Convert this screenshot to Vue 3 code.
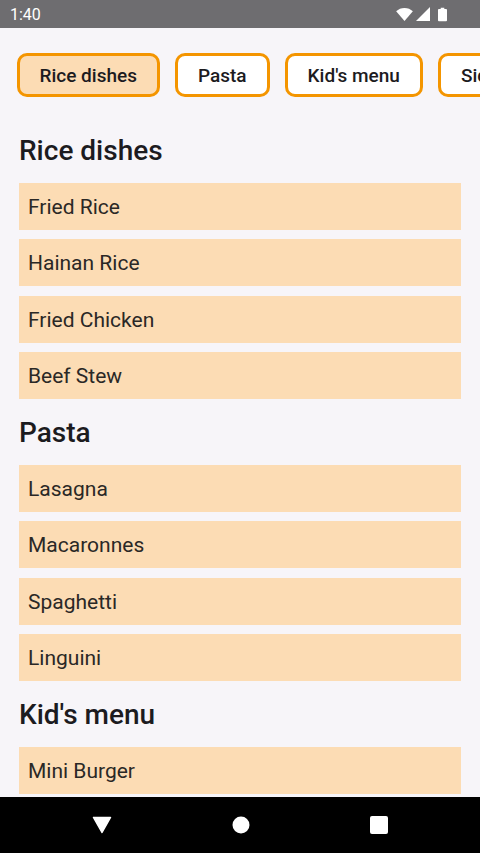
<script setup>
const tabs = [
  { label: 'Rice dishes', selected: true },
  { label: 'Pasta' },
  { label: "Kid's menu" },
  { label: 'Side dishes' },
]

const sections = [
  { title: 'Rice dishes', items: ['Fried Rice', 'Hainan Rice', 'Fried Chicken', 'Beef Stew'] },
  { title: 'Pasta', items: ['Lasagna', 'Macaronnes', 'Spaghetti', 'Linguini'] },
  { title: "Kid's menu", items: ['Mini Burger'] },
]
</script>

<template>
  <div class="screen">
    <div class="status-bar">
      <span class="status-bar__time">1:40</span>
      <div class="status-bar__icons">
        <svg width="17" height="13" viewBox="0 0 18 14"><path d="M0 3.600C2.400 1.300 5.500 0 9 0s6.600 1.300 9 3.600L9 14z" fill="#fff" /></svg>
        <svg class="status-bar__signal" width="14" height="14" viewBox="0 0 14 14"><path d="M14 0v14H0z" fill="#fff" /></svg>
        <svg class="status-bar__battery" width="9" height="15" viewBox="0 0 10 15"><path d="M3 0h4v1.500h2a1 1 0 0 1 1 1V14a1 1 0 0 1-1 1H1a1 1 0 0 1-1-1V2.500a1 1 0 0 1 1-1h2z" fill="#fff" /></svg>
      </div>
    </div>

    <main class="content">
      <div class="tabs">
        <button
          v-for="tab in tabs"
          :key="tab.label"
          class="tabs__tab"
          :class="{ 'tabs__tab--selected': tab.selected }"
        >
          {{ tab.label }}
        </button>
      </div>

      <section v-for="section in sections" :key="section.title" class="menu-section">
        <h2 class="menu-section__title">{{ section.title }}</h2>
        <div v-for="item in section.items" :key="item" class="menu-section__item">{{ item }}</div>
      </section>
    </main>

    <nav class="nav-bar">
      <svg width="20" height="18" viewBox="0 0 20 18"><path d="M1.500 1.500h17L10 16.500z" fill="#fff" stroke="#fff" stroke-width="1.500" stroke-linejoin="round" /></svg>
      <svg width="18" height="18" viewBox="0 0 18 18"><circle cx="9" cy="9" r="8.500" fill="#fff" /></svg>
      <svg width="18" height="18" viewBox="0 0 18 18"><rect width="18" height="18" rx="2" fill="#fff" /></svg>
    </nav>
  </div>
</template>

<style scoped>
.screen {
  display: flex;
  flex-direction: column;
  width: 480px;
  height: 853px;
  overflow: hidden;
  background: #f7f5f9;
  color: #1c1b1f;
  font-family: Roboto, "Liberation Sans", sans-serif;
}

.status-bar {
  display: flex;
  flex: none;
  align-items: center;
  justify-content: space-between;
  height: 28px;
  padding: 0 33px 0 10px;
  box-sizing: border-box;
  background: #6e6d70;
  color: #fff;
}

.status-bar__time {
  font-size: 16px;
}

.status-bar__icons {
  display: flex;
  align-items: center;
}

.status-bar__signal {
  margin-left: 3px;
}

.status-bar__battery {
  margin-left: 8px;
}

.content {
  flex: 1;
  min-height: 0;
  overflow: hidden;
}

.tabs {
  display: flex;
  gap: 15px;
  padding: 25px 0 0 16.500px;
  overflow: hidden;
}

.tabs__tab {
  flex: none;
  height: 44px;
  padding: 0 20px;
  border: 3px solid #f49500;
  border-radius: 10px;
  background: #fff;
  color: #1c1b1f;
  font-family: inherit;
  font-size: 19px;
  font-weight: 500;
}

.tabs__tab--selected {
  background: #fcdcb4;
}

.menu-section {
  padding: 0 19px;
}

.menu-section:first-of-type {
  padding-top: 29px;
}

.menu-section__title {
  margin: 0;
  padding: 7px 0 14px;
  font-size: 28px;
  line-height: 36px;
  font-weight: 500;
}

.menu-section__item {
  height: 47px;
  margin-bottom: 9.300px;
  padding-left: 9px;
  background: #fcdcb4;
  color: #2a2826;
  font-size: 21px;
  line-height: 48px;
}

.nav-bar {
  display: flex;
  flex: none;
  align-items: center;
  justify-content: center;
  gap: 120px;
  height: 56px;
  background: #000;
}
</style>
